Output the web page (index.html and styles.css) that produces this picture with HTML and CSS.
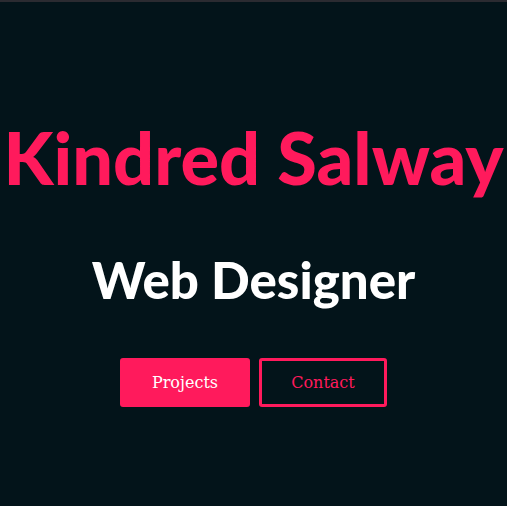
FILE: index.html
```html
<!DOCTYPE html>
<html>
<head>
<meta charset="utf-8">
<link rel="stylesheet" href="styles.css">
</head>
<body>
<main class="hero">
  <h1 class="name">Kindred Salway</h1>
  <h2 class="role">Web Designer</h2>
  <div class="actions">
    <a class="btn btn-fill" href="#">Projects</a>
    <a class="btn btn-outline" href="#">Contact</a>
  </div>
</main>
</body>
</html>
```
FILE: styles.css
```css
html, body {
  margin: 0;
  padding: 0;
}
body {
  background: #03141a;
  border-top: 2px solid #2b2b31;
  height: 504px;
  overflow: hidden;
}
.hero {
  display: flex;
  flex-direction: column;
  align-items: center;
  padding-top: 112px;
}
.name {
  margin: 0;
  font-family: Lato, sans-serif;
  font-weight: 900;
  font-size: 72px;
  line-height: 1.2;
  color: #ff1a5c;
  white-space: nowrap;
}
.role {
  margin: 49px 0 0;
  font-family: Lato, sans-serif;
  font-weight: 900;
  font-size: 51px;
  line-height: 1.2;
  color: #ffffff;
  white-space: nowrap;
}
.actions {
  display: flex;
  gap: 9px;
  margin-top: 47.5px;
}
.btn {
  display: flex;
  align-items: center;
  justify-content: center;
  box-sizing: border-box;
  height: 49px;
  font-family: "DejaVu Serif", serif;
  font-size: 16px;
  text-decoration: none;
  border-radius: 3px;
}
.btn-fill {
  width: 130px;
  background: #ff1a5c;
  color: #ffffff;
}
.btn-outline {
  width: 128px;
  border: 3px solid #ff1a5c;
  color: #ff1a5c;
}
```
